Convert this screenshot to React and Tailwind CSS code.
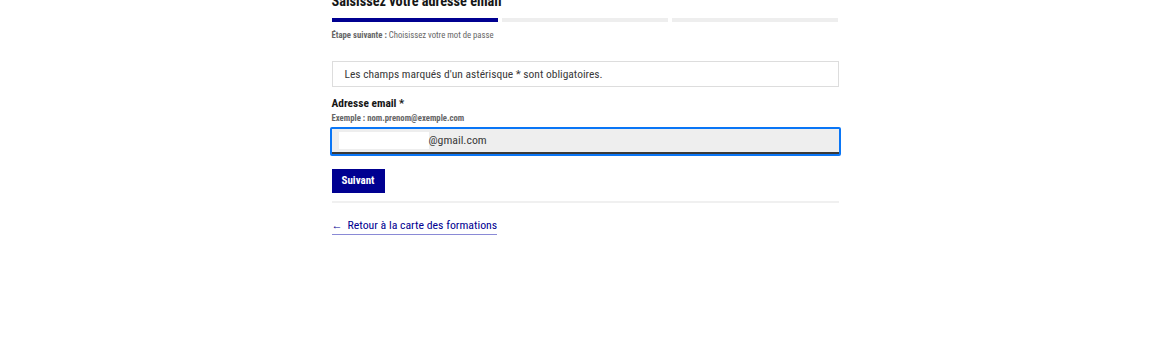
export default function App() {
  return (
    <div className="min-h-screen bg-white font-['Roboto_Condensed','Roboto',sans-serif] text-[#161616]">
      <div className="mx-auto w-[507px]">
        <h1 className="-mt-[9px] text-[14.3px] font-bold leading-[20px] text-[#161616]">
          Saisissez votre adresse email
        </h1>

        {/* steps */}
        <div className="mt-[7px] flex gap-[4px]">
          <div className="h-[4px] flex-1 bg-[#000091]" />
          <div className="h-[4px] flex-1 bg-[#eeeeee]" />
          <div className="h-[4px] flex-1 bg-[#eeeeee]" />
        </div>
        <p className="mt-[7px] text-[8.7px] leading-[12px] text-[#666666]">
          <span className="font-bold">Étape suivante :</span> Choisissez votre mot de passe
        </p>

        <div className="mt-[20px] border border-[#dddddd] px-[12px] py-[5px] text-[11.5px] leading-[14px] text-[#3a3a3a]">
          Les champs marqués d'un astérisque * sont obligatoires.
        </div>

        <label className="mt-[9px] block text-[11.4px] font-bold leading-[15px]">Adresse email *</label>
        <p className="mt-[2px] text-[8.7px] font-bold leading-[10px] text-[#666666]">
          Exemple : nom.prenom@exemple.com
        </p>

        <div className="-mx-[2px] mt-[4px] rounded-[2px] border-2 border-[#0a76f6]">
          <div className="flex h-[25px] items-center border-b-2 border-[#3a3a3a] bg-[#eeeeee] pl-[7px]">
            <span className="h-[17px] w-[90px] bg-white" />
            <span className="text-[11.8px] leading-[15px] text-[#3a3a3a]">@gmail.com</span>
          </div>
        </div>

        <button className="mt-[13px] flex h-[24px] w-[53px] items-center justify-center bg-[#000091] text-[11px] font-bold text-white">
          Suivant
        </button>

        <div className="mt-[8px] h-[2px] bg-[#f0f0f0]" />

        <a href="#" className="mt-[15px] inline-flex items-center gap-[5px] border-b border-[#8a8ad6] pb-[1px] text-[11.8px] leading-[15px] text-[#000091]">
          <span className="text-[11px]">←</span>
          <span>Retour à la carte des formations</span>
        </a>
      </div>
    </div>
  );
}
